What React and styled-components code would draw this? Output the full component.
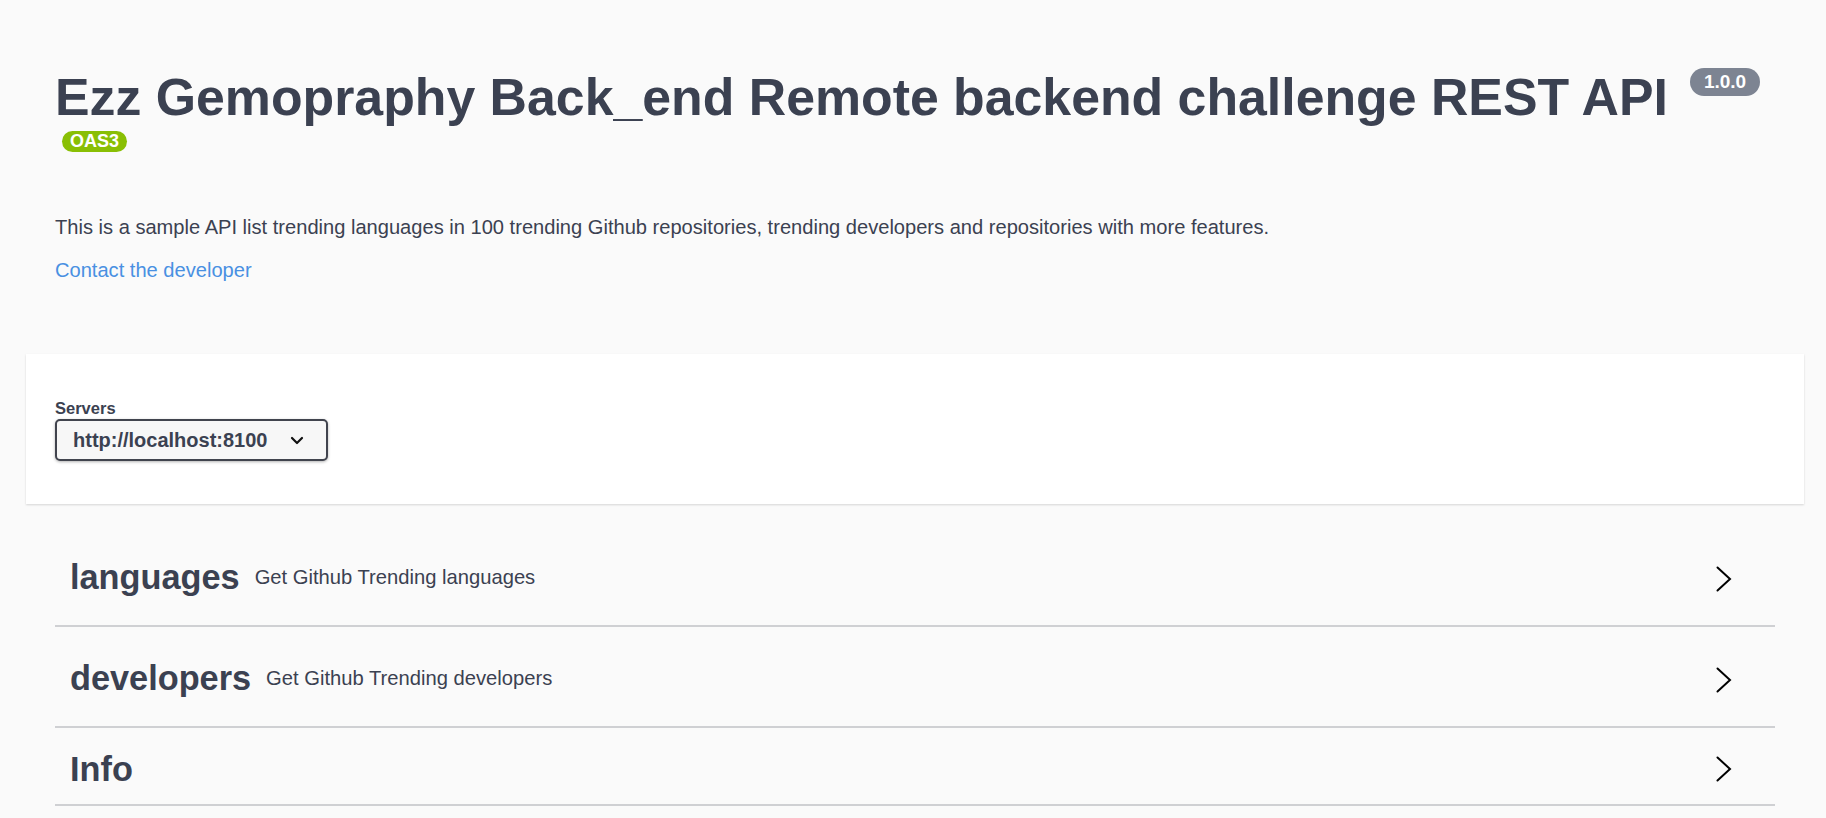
import React from "react";
import styled, { createGlobalStyle } from "styled-components";

const Global = createGlobalStyle`
  html, body { margin: 0; padding: 0; background: #fafafa; }
  body { font-family: "Liberation Sans", Arial, sans-serif; color: #3b4151; }
  * { box-sizing: border-box; }
`;

const Page = styled.div`
  padding: 0 22px 0 26px;
  min-height: 818px;
`;

const Wrapper = styled.div`
  padding: 0 29px;
`;

const Info = styled.section`
  padding-top: 67px;
  padding-bottom: 69px;
`;

const TitleRow = styled.div`
  display: flex;
  align-items: flex-start;
`;

const Title = styled.h2`
  margin: 0;
  font-size: 51.8px;
  line-height: 60px;
  font-weight: 700;
  color: #3b4151;
  white-space: nowrap;
`;

const Pill = styled.span`
  display: inline-block;
  font-family: "Liberation Sans", Arial, sans-serif;
  font-weight: 700;
  color: #fff;
  background: ${(p) => p.$bg};
  border-radius: 57px;
  font-size: ${(p) => p.$size}px;
  height: ${(p) => p.$h}px;
  line-height: ${(p) => p.$h}px;
  padding: 0 ${(p) => p.$px}px;
  margin-top: ${(p) => p.$mt}px;
  margin-left: ${(p) => p.$ml}px;
`;

const BadgeRow = styled.div`
  display: flex;
`;

const Description = styled.p`
  margin: 60px 0 0;
  font-size: 20.1px;
  line-height: 30px;
  color: #3b4151;
`;

const ContactLink = styled.a`
  display: block;
  margin-top: 13px;
  font-size: 20.1px;
  line-height: 30px;
  color: #4990e2;
  text-decoration: none;
`;

const SchemeContainer = styled.section`
  background: #fff;
  box-shadow: 0 1px 2px 0 rgba(0, 0, 0, 0.15);
  padding: 45px 0 43px;
  margin-bottom: 29px;
`;

const ServersLabel = styled.div`
  font-size: 16.5px;
  line-height: 19px;
  font-weight: 700;
  color: #3b4151;
  margin-bottom: 1px;
`;

const SelectBox = styled.button`
  display: flex;
  align-items: center;
  justify-content: space-between;
  width: 273px;
  height: 42px;
  padding: 0 22px 0 16px;
  border: 2px solid #41444e;
  border-radius: 5px;
  background: #f7f7f7;
  box-shadow: 0 1px 3px 0 rgba(0, 0, 0, 0.3);
  font-family: "Liberation Sans", Arial, sans-serif;
  font-size: 20px;
  font-weight: 700;
  color: #3b4151;
  cursor: pointer;
`;

const Tags = styled.div`
  display: flex;
  flex-direction: column;
`;

const TagRow = styled.h3`
  display: flex;
  align-items: center;
  margin: 0 0 7px;
  height: ${(p) => (p.$tall ? 94 : 71)}px;
  padding: 0 43px ${(p) => (p.$tall ? 4 : 0)}px 15px;
  border-bottom: 2px solid #cfd0d3;
  font-weight: 400;
  cursor: pointer;
`;

const TagName = styled.span`
  font-size: 34.3px;
  font-weight: 700;
  color: #3b4151;
`;

const TagDesc = styled.small`
  flex: 1;
  padding: 0 15px;
  font-size: 20.2px;
  color: #3b4151;
`;

const Spacer = styled.div`
  flex: 1;
`;

const ArrowBox = styled.span`
  display: flex;
  margin-top: ${(p) => (p.$tall ? 3 : 0)}px;
  margin-bottom: ${(p) => (p.$tall ? 0 : 2)}px;
`;

const Chevron = ({ tall }) => (
  <ArrowBox $tall={tall}>
    <svg width="16" height="26" viewBox="0 0 16 26" fill="none">
      <polyline
        points="1.5,1.5 14,13 1.5,24.5"
        stroke="#000"
        strokeWidth="2"
        strokeLinecap="round"
        strokeLinejoin="miter"
      />
    </svg>
  </ArrowBox>
);

const SmallChevron = () => (
  <svg width="14" height="9" viewBox="0 0 14 9" fill="none">
    <polyline
      points="2,2 7,7 12,2"
      stroke="#111"
      strokeWidth="2.2"
      strokeLinecap="round"
      strokeLinejoin="round"
    />
  </svg>
);

const tags = [
  { name: "languages", desc: "Get Github Trending languages" },
  { name: "developers", desc: "Get Github Trending developers" },
  { name: "Info" },
];

export default function App() {
  return (
    <>
      <Global />
      <Page>
        <Wrapper>
          <Info>
            <TitleRow>
              <Title>Ezz Gemopraphy Back_end Remote backend challenge REST API</Title>
              <Pill $bg="#7d8492" $size={19} $h={28} $px={14} $mt={1} $ml={22}>
                1.0.0
              </Pill>
            </TitleRow>
            <BadgeRow>
              <Pill $bg="#89bf04" $size={18} $h={21} $px={8} $mt={4} $ml={7}>
                OAS3
              </Pill>
            </BadgeRow>
            <Description>
              This is a sample API list trending languages in 100 trending Github repositories,
              trending developers and repositories with more features.
            </Description>
            <ContactLink href="#">Contact the developer</ContactLink>
          </Info>
        </Wrapper>
        <SchemeContainer>
          <Wrapper>
            <ServersLabel>Servers</ServersLabel>
            <SelectBox type="button">
              <span>http://localhost:8100</span>
              <SmallChevron />
            </SelectBox>
          </Wrapper>
        </SchemeContainer>
        <Wrapper>
          <Tags>
            {tags.map((t) => (
              <TagRow key={t.name} $tall={!!t.desc}>
                <TagName>{t.name}</TagName>
                {t.desc ? <TagDesc>{t.desc}</TagDesc> : <Spacer />}
                <Chevron tall={!!t.desc} />
              </TagRow>
            ))}
          </Tags>
        </Wrapper>
      </Page>
    </>
  );
}
